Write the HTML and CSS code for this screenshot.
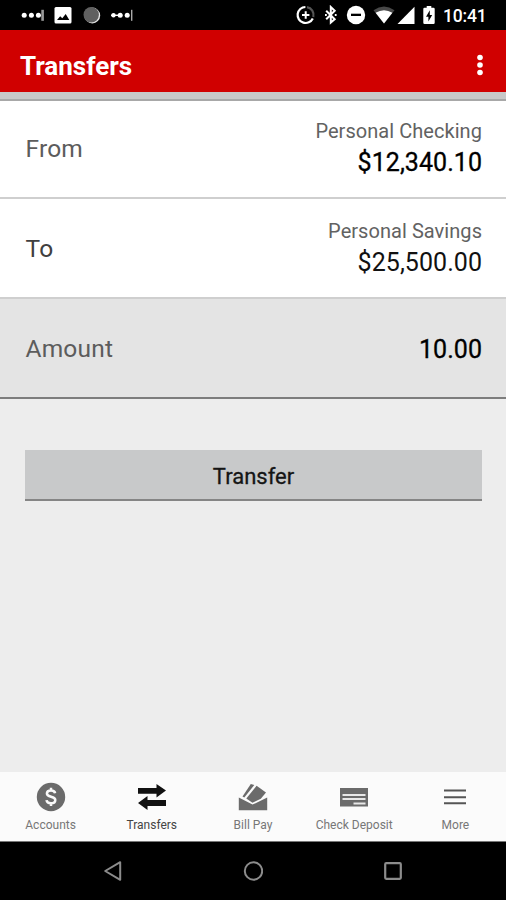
FILE: index.html
```html
<!DOCTYPE html>
<html lang="en">

<head>
    <meta charset="UTF-8">
    <meta name="viewport" content="width=device-width, initial-scale=1.0">
    <title>Transfers</title>
    <link rel="stylesheet" href="styles.css">
</head>

<body>
    <div class="app">
        <!-- Status Bar -->
        <div class="status-bar">
            <div class="status-left">
                <svg width="24" height="18" viewBox="0 0 24 18" fill="#fff">
                    <circle cx="3.2" cy="9.3" r="2.5"/><circle cx="10.4" cy="9.3" r="2.5"/><circle cx="17.4" cy="9.3" r="2.5"/>
                    <rect x="20.3" y="3.8" width="2.6" height="11" fill="#999"/>
                </svg>
                <svg width="18" height="18" viewBox="0 0 18 18">
                    <rect x="0.5" y="1" width="17" height="16.5" rx="1.5" fill="#fff"/>
                    <path d="M3 14 L6.2 10.2 L8.3 12.3 L11.7 8 L15.3 14 Z" fill="#000"/>
                </svg>
                <svg width="18" height="18" viewBox="0 0 18 18">
                    <circle cx="9.3" cy="9.5" r="7.9" fill="#e5e5e5"/>
                    <circle cx="8.2" cy="8.7" r="7.7" fill="#606060"/>
                </svg>
                <svg width="24" height="18" viewBox="0 0 24 18" fill="#fff">
                    <rect x="1" y="8.6" width="7" height="1.4"/>
                    <circle cx="3.5" cy="9.3" r="2.2"/><circle cx="10.2" cy="9.3" r="2.5"/><circle cx="17.2" cy="9.3" r="2.5"/>
                    <rect x="21" y="3.8" width="1.4" height="11" fill="#aaa"/>
                </svg>
            </div>
            <div class="status-right">
                <svg width="20" height="20" viewBox="0 0 20 20" fill="none" stroke-width="2.2">
                    <path d="M9.4 2 A8 8 0 1 0 16.8 13.5" stroke="#fff"/>
                    <path d="M11 2.1 A8 8 0 0 1 17.3 12" stroke="#555"/>
                    <path d="M9.7 6.3 V13.7 M6 10 H13.4" stroke="#fff" stroke-width="2"/>
                </svg>
                <svg width="14" height="20" viewBox="0 0 14 20" fill="none" stroke="#fff" stroke-width="2">
                    <path d="M2.2 5.7 L10.7 14.2 L6.8 17.6 V2 L10.7 5.7 L2.2 14.2"/>
                    <path d="M1 10 H2.8 M10.8 10 H12.6" stroke-width="2"/>
                </svg>
                <svg width="20" height="20" viewBox="0 0 20 20">
                    <circle cx="10" cy="10" r="9.2" fill="#fff"/>
                    <rect x="5" y="8.7" width="10" height="2.3" fill="#000"/>
                </svg>
                <svg width="22" height="20" viewBox="0 0 22 20">
                    <path d="M0.5 5.2 Q11 -2.2 21.5 5.2 L11 18.5 Z" fill="#484848"/>
                    <path d="M2.6 7.8 Q11 2.8 19.4 7.8 L11 18.5 Z" fill="#fff"/>
                </svg>
                <svg width="18" height="20" viewBox="0 0 18 20" fill="#fff">
                    <path d="M0.5 19 L17.5 1.8 V19 Z"/>
                </svg>
                <svg width="12" height="20" viewBox="0 0 12 20">
                    <path d="M3.7 1 H8.3 V2.8 H10.5 Q11.7 2.8 11.7 4 V17.7 Q11.7 19 10.5 19 H1.5 Q0.3 19 0.3 17.7 V4 Q0.3 2.8 1.5 2.8 H3.7 Z" fill="#fff"/>
                    <path d="M6.8 5.3 L3 11.7 H5.4 V16.5 L9.2 10 H6.8 Z" fill="#000"/>
                </svg>
                <span class="clock">10:41</span>
            </div>
        </div>

        <!-- Header -->
        <header class="header">
            <h1>Transfers</h1>
            <svg width="6" height="24" viewBox="0 0 6 24" fill="#fff">
                <circle cx="3" cy="3.5" r="2.8"/><circle cx="3" cy="11" r="2.8"/><circle cx="3" cy="18.5" r="2.8"/>
            </svg>
        </header>

        <!-- Transfer Form -->
        <main class="content">
            <div class="row">
                <span class="row-label">From</span>
                <div class="account">
                    <span class="account-name">Personal Checking</span>
                    <span class="account-amount strong">$12,340.10</span>
                </div>
            </div>
            <div class="row">
                <span class="row-label to-label">To</span>
                <div class="account">
                    <span class="account-name">Personal Savings</span>
                    <span class="account-amount">$25,500.00</span>
                </div>
            </div>
            <div class="row amount-row">
                <span class="row-label">Amount</span>
                <span class="account-amount strong">10.00</span>
            </div>
            <button class="transfer-button">Transfer</button>
        </main>

        <!-- Bottom Tabs -->
        <nav class="tabs">
            <a class="tab">
                <svg width="30" height="30" viewBox="0 0 30 30">
                    <circle cx="15" cy="15" r="14.2" fill="#6b6b6b"/>
                    <path d="M19.1 11.2 C18.8 9.2 17.2 8.5 15 8.5 C12.6 8.5 10.9 9.6 10.9 11.5 C10.9 15.9 19.3 13.6 19.3 18 C19.3 20.2 17.5 21.3 15 21.3 C12.4 21.3 10.8 20.2 10.5 18.1 M15 5.8 V8.6 M15 21.3 V24" fill="none" stroke="#fafafa" stroke-width="2.5"/>
                </svg>
                <span>Accounts</span>
            </a>
            <a class="tab active">
                <svg width="30" height="30" viewBox="0 0 30 30" fill="#111">
                    <path d="M1 6 H19.5 V2 L29 8.6 L19.5 15.5 V11.7 H1 Z"/>
                    <path d="M29 18 H10.5 V14 L1 21 L10.5 28 V24 H29 Z"/>
                </svg>
                <span>Transfers</span>
            </a>
            <a class="tab">
                <svg width="30" height="30" viewBox="0 0 30 30" fill="#6b6b6b">
                    <path d="M0.8 15.6 L14.5 22.6 L29.2 15.6 V28.2 H0.8 Z"/>
                    <path d="M4.5 14.6 L12.8 2 L16.3 3 L6.3 15.4 Z"/>
                    <path d="M8.3 16.4 L18.6 3.8 L28 10.6 L22.8 16.8 L14.5 20.7 Z"/>
                </svg>
                <span>Bill Pay</span>
            </a>
            <a class="tab">
                <svg width="30" height="30" viewBox="0 0 30 30">
                    <rect x="1" y="6" width="28" height="18.5" fill="#6b6b6b"/>
                    <path d="M3.5 13 H26.5 M3.5 17 H26.5 M14.5 21.5 H26.5" stroke="#e8e8e8" stroke-width="1.9"/>
                </svg>
                <span>Check Deposit</span>
            </a>
            <a class="tab">
                <svg width="30" height="30" viewBox="0 0 30 30" stroke="#555" stroke-width="2">
                    <path d="M4 8.5 H26 M4 15.2 H26 M4 21.3 H26"/>
                </svg>
                <span>More</span>
            </a>
        </nav>

        <!-- Android Navigation -->
        <div class="system-nav">
            <svg width="20" height="22" viewBox="0 0 20 22" fill="none" stroke="#8c8c8c" stroke-width="2" stroke-linejoin="round">
                <path d="M17.2 2.2 V19.8 L2.2 11 Z"/>
            </svg>
            <svg width="20" height="20" viewBox="0 0 20 20" fill="none" stroke="#8c8c8c" stroke-width="2">
                <circle cx="10.5" cy="10" r="8.7"/>
            </svg>
            <svg width="20" height="20" viewBox="0 0 20 20" fill="none" stroke="#8c8c8c" stroke-width="2.2">
                <rect x="2.2" y="2.2" width="15.6" height="15.6" rx="1"/>
            </svg>
        </div>
    </div>
</body>

</html>
```

FILE: styles.css
```css
* {
    box-sizing: border-box;
}

body {
    margin: 0;
    font-family: Roboto, "Liberation Sans", sans-serif;
    background: #000;
}

svg {
    display: block;
    flex: none;
}

.app {
    width: 100%;
    height: 900px;
    display: flex;
    flex-direction: column;
    overflow: hidden;
}

/* Status Bar */
.status-bar {
    height: 30px;
    flex: none;
    display: flex;
    justify-content: space-between;
    padding: 0 20px 0 21px;
    background: #000;
    color: #fff;
}

.status-left {
    display: flex;
    align-items: center;
    gap: 9px;
}

.status-left svg:nth-child(3) {
    margin-left: 2px;
}

.status-right {
    display: flex;
    align-items: center;
    gap: 8px;
}

.status-right svg:nth-child(4) {
    margin-left: -1px;
}

.status-right svg:nth-child(5) {
    margin-left: -6px;
}

.clock {
    width: 43px;
    font-size: 17.5px;
    line-height: 30px;
    font-weight: 500;
    letter-spacing: -0.2px;
    padding-top: 2px;
    white-space: nowrap;
}

/* Header */
.header {
    height: 62px;
    flex: none;
    display: flex;
    align-items: center;
    justify-content: space-between;
    padding: 9px 23px 0 20px;
    background: #d00000;
    color: #fff;
}

.header h1 {
    margin: 0;
    font-size: 26px;
    line-height: 30px;
    font-weight: 700;
}

/* Transfer Form */
.content {
    flex: 1;
    display: flex;
    flex-direction: column;
    border-top: 7px solid #c8c8c8;
    background: #ededed;
}

.row {
    height: 100px;
    display: flex;
    align-items: center;
    justify-content: space-between;
    padding: 2px 24px 0 25.5px;
    background: #fff;
    border-bottom: 2px solid #cfcfcf;
}

.row:first-child {
    padding-top: 0;
    border-top: 2px solid #a8a8a8;
}

.row-label {
    font-size: 24.5px;
    line-height: 28px;
    letter-spacing: 0.2px;
    color: #5c5c5c;
}

.to-label {
    color: #404040;
}

.account {
    display: flex;
    flex-direction: column;
    align-items: flex-end;
    padding-bottom: 2px;
}

.account-name {
    font-size: 20px;
    line-height: 28px;
    letter-spacing: 0.05px;
    color: #626262;
}

.account-amount {
    font-size: 25px;
    line-height: 35px;
    letter-spacing: 0.05px;
    color: #111;
}

.strong {
    color: #000;
    -webkit-text-stroke: 0.3px #000;
}

.amount-row {
    background: #e4e4e4;
    border-bottom: 2px solid #7d7d7d;
}

.transfer-button {
    height: 51px;
    margin: 51px 24px 0 25px;
    padding: 3px 0 0;
    border: none;
    border-bottom: 2px solid #858585;
    background: #c8c9ca;
    color: #151515;
    font-family: inherit;
    font-size: 22px;
    -webkit-text-stroke: 0.3px #151515;
    cursor: pointer;
}

/* Bottom Tabs */
.tabs {
    height: 70px;
    flex: none;
    display: grid;
    grid-template-columns: repeat(5, 1fr);
    background: #fbfbfb;
    border-bottom: 1px solid #777;
}

.tab {
    display: flex;
    flex-direction: column;
    align-items: center;
    padding-top: 10px;
    font-size: 12px;
    line-height: 16px;
    color: #777;
    white-space: nowrap;
}

.tab span {
    margin-top: 5px;
}

.tab.active {
    color: #444;
}

/* Android Navigation */
.system-nav {
    height: 58px;
    flex: none;
    display: flex;
    align-items: center;
    justify-content: center;
    gap: 120px;
    background: #000;
}
```
